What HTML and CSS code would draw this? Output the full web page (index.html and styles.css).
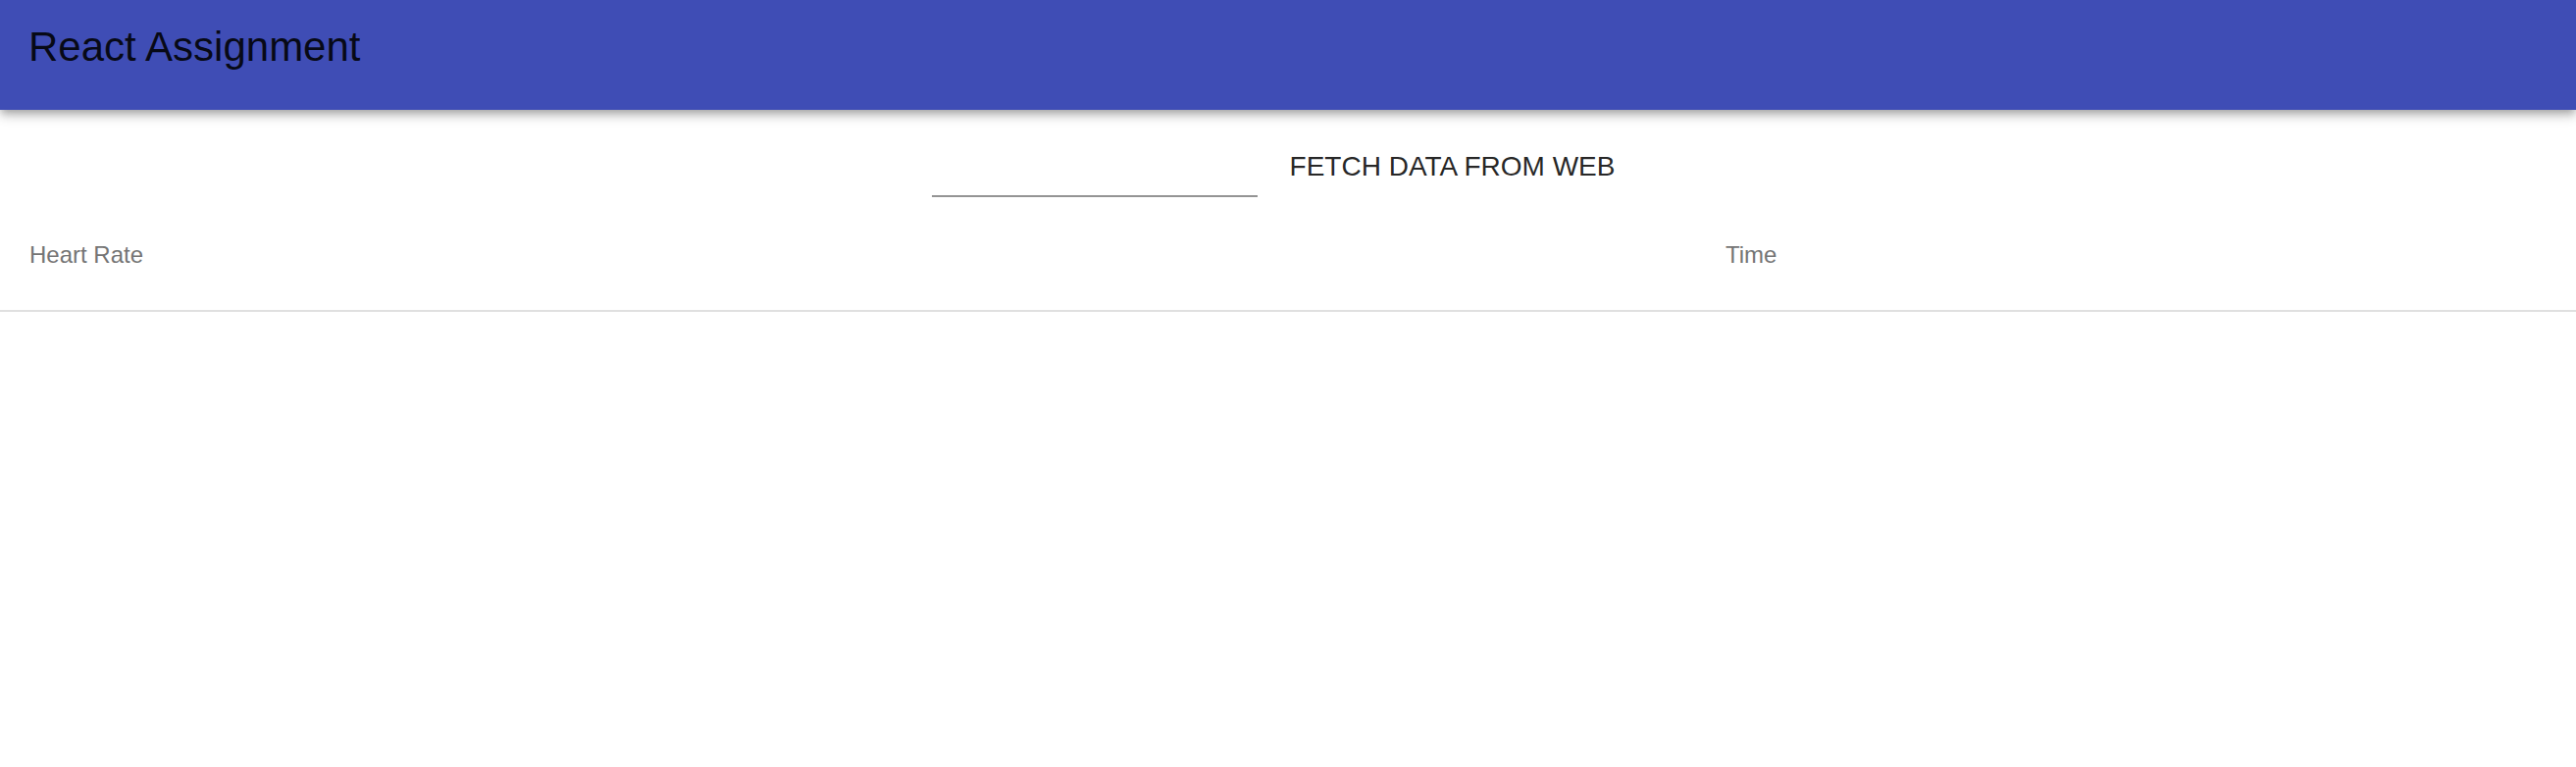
FILE: index.html
```html
<!DOCTYPE html>
<html lang="en">
<head>
<meta charset="utf-8">
<title>React Assignment</title>
<link rel="stylesheet" href="styles.css">
</head>
<body>
<header class="appbar">
  <h1 class="title">React Assignment</h1>
</header>
<main>
  <div class="controls">
    <div class="field"></div>
    <button class="fetch" type="button">FETCH DATA FROM WEB</button>
  </div>
  <div class="table">
    <div class="cell">Heart Rate</div>
    <div class="cell">Time</div>
  </div>
</main>
</body>
</html>
```

FILE: styles.css
```css
html, body {
  margin: 0;
  padding: 0;
  background: #ffffff;
  font-family: "Liberation Sans", Arial, Helvetica, sans-serif;
}

.appbar {
  position: relative;
  z-index: 1;
  height: 112px;
  box-sizing: border-box;
  padding: 27px 0 0 29px;
  background: #3f4db5;
  box-shadow: 0 4px 7px -2px rgba(0, 0, 0, 0.2),
              0 7px 9px 0 rgba(0, 0, 0, 0.14),
              0 2px 17px 0 rgba(0, 0, 0, 0.12);
}

.title {
  margin: 0;
  font-size: 42px;
  line-height: 42px;
  font-weight: 400;
  color: rgba(0, 0, 0, 0.88);
}

.controls {
  display: flex;
  justify-content: center;
  align-items: flex-start;
  padding-top: 30px;
}

.field {
  width: 332px;
  height: 57px;
  border-bottom: 2px solid #949494;
}

.fetch {
  display: block;
  margin: 14px 0 0 33px;
  padding: 0 30px 0 0;
  border: 0;
  background: transparent;
  font-family: "Liberation Sans", Arial, Helvetica, sans-serif;
  font-size: 28px;
  line-height: 28px;
  color: rgba(0, 0, 0, 0.87);
}

.table {
  display: grid;
  grid-template-columns: 1729px 1fr;
  border-bottom: 2px solid #e0e0e0;
}

.cell {
  padding: 47px 0 44px 30px;
  font-size: 24px;
  line-height: 24px;
  color: #757575;
}
```
